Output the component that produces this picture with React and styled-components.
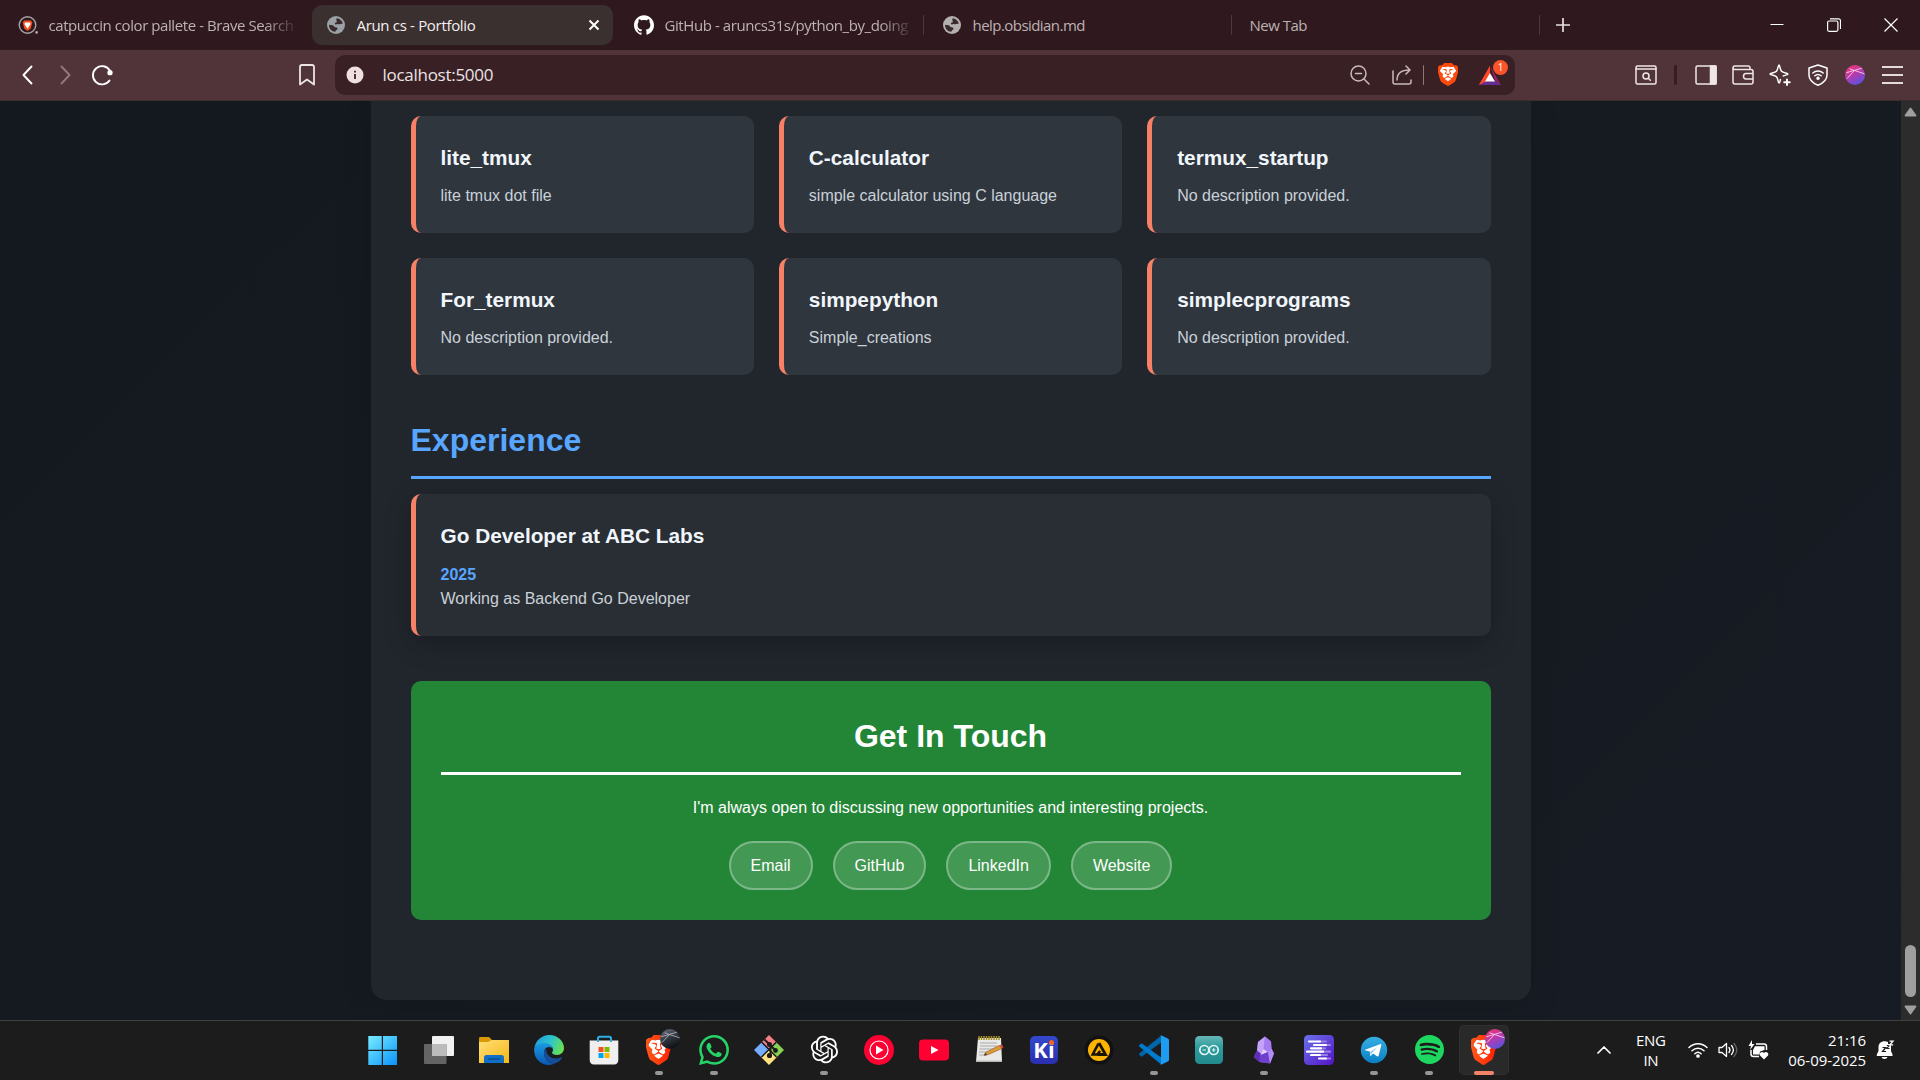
import React from "react";
import styled, { createGlobalStyle, css } from "styled-components";
import { SiBrave, SiGithub, SiWhatsapp, SiSpotify } from "react-icons/si";
import { RiOpenaiFill } from "react-icons/ri";

const Global = createGlobalStyle`
  *, *::before, *::after { box-sizing: border-box; }
  body { margin: 0; background: #1c1c1c; overflow: hidden; }
  h2, h3, p { margin: 0; }
  svg { display: block; flex: none; }
`;

const ui = `"Open Sans", "Noto Sans", sans-serif`;

const Screen = styled.div`
  width: 1920px;
  height: 1080px;
  display: flex;
  flex-direction: column;
  overflow: hidden;
  font-family: ${ui};
`;

/* ---------- tab strip ---------- */
const TabStrip = styled.header`
  height: 50px;
  flex: none;
  display: flex;
  align-items: center;
  background: #2f191e;
`;
const TabSlot = styled.div`
  width: 308px;
  height: 50px;
  padding: 5px 3px 5px 4px;
  display: flex;
  align-items: center;
  position: relative;
  ${(p) =>
    p.$divider &&
    css`
      &::after {
        content: "";
        position: absolute;
        right: 0;
        top: 15px;
        width: 1px;
        height: 20px;
        background: #4d383c;
      }
    `}
`;
const TabBody = styled.div`
  flex: 1;
  min-width: 0;
  height: 40px;
  padding: 0 ${(p) => (p.$fade ? 6 : 10)}px 0 13.5px;
  display: flex;
  align-items: center;
  border-radius: 10px;
  background: ${(p) => (p.$active ? "#3b3030" : "transparent")};
  color: ${(p) => (p.$active ? "#f5efef" : "#bcb2b3")};
`;
const TabIcon = styled.span`
  width: 20px;
  margin-right: 11px;
  display: flex;
  justify-content: center;
`;
const TabTitle = styled.span`
  flex: 1;
  min-width: 0;
  font-size: 15px;
  line-height: 22px;
  padding-bottom: 1px;
  letter-spacing: ${(p) => p.$spacing}px;
  white-space: nowrap;
  overflow: hidden;
  ${(p) => p.$fade && css`mask-image: linear-gradient(90deg, #000 86%, rgba(0, 0, 0, 0.15) 98%);`}
`;
const NewTabButton = styled.div`
  width: 46px;
  display: flex;
  justify-content: center;
`;
const WindowButtons = styled.div`
  margin-left: auto;
  padding-right: 1px;
  display: flex;
`;
const WindowButton = styled.div`
  width: 57px;
  display: flex;
  align-items: center;
  justify-content: center;
`;

/* ---------- toolbar ---------- */
const Toolbar = styled.div`
  height: 51px;
  flex: none;
  display: flex;
  align-items: center;
  padding: 0 8.8px 1px 8.5px;
  background: #50343a;
  border-bottom: 1px solid #3c2b2f;
`;
const Cell = styled.div`
  width: ${(p) => p.$w || 37.4}px;
  display: flex;
  flex: none;
  align-items: center;
  justify-content: center;
`;
const BookmarkCell = styled(Cell)`
  margin: 0 8.5px 0 165.5px;
`;
const AddressBar = styled.div`
  width: 1180px;
  height: 40px;
  flex: none;
  display: flex;
  align-items: center;
  padding: 0 4px 0 0;
  border-radius: 10px;
  background: #382024;
`;
const Url = styled.span`
  flex: 1;
  padding-left: 7.5px;
  color: #ece3e4;
  font-size: 17px;
  line-height: 24px;
  letter-spacing: -0.28px;
`;
const Divider = styled.i`
  width: ${(p) => p.$w || 1}px;
  height: 20px;
  margin: ${(p) => p.$m || 0};
  border-radius: 1px;
  background: ${(p) => p.$color};
`;
const Actions = styled.div`
  margin-left: auto;
  display: flex;
`;
const RewardsIcon = styled.div`
  position: relative;
  width: 24px;
  height: 22px;
`;
const Badge = styled.span`
  position: absolute;
  left: 15px;
  top: -4px;
  width: 15px;
  height: 15px;
  border-radius: 50%;
  background: #fb542b;
  color: #fff;
  font-size: 10px;
  line-height: 15px;
  text-align: center;
`;

/* ---------- web page ---------- */
const Viewport = styled.div`
  height: 919px;
  flex: none;
  display: flex;
`;
const Page = styled.main`
  width: 1901px;
  height: 919px;
  overflow: hidden;
  display: flex;
  justify-content: center;
  align-items: flex-start;
  background: linear-gradient(135deg, #14191f 0%, #161b22 60%, #171c24 100%);
  font-family: "Liberation Sans", Arial, sans-serif;
  line-height: 1.6;
`;
const Container = styled.div`
  width: 1160px;
  height: 899px;
  padding: 15px 40px 80px;
  background: #21262d;
  border-radius: 0 0 15px 15px;
  box-shadow: 0 8px 32px rgba(0, 0, 0, 0.12);
`;
const ProjectGrid = styled.section`
  display: grid;
  grid-template-columns: repeat(3, 1fr);
  gap: 25px;
`;
const Card = styled.article`
  padding: 25px;
  border-left: 5px solid #f78166;
  border-radius: 10px;
  background: ${(p) => (p.$raised ? "#292e34" : "#30363d")};
  box-shadow: ${(p) => (p.$raised ? "0 8px 26px rgba(0,0,0,0.25)" : "none")};
`;
const CardTitle = styled.h3`
  margin-bottom: ${(p) => p.$gap || 9}px;
  color: #f0f6fc;
  font-size: 20.8px;
`;
const CardText = styled.p`
  color: #c9d1d9;
  font-size: 16px;
  margin-bottom: ${(p) => (p.$flush ? 0 : -1)}px;
`;
const Period = styled.p`
  color: #58a6ff;
  font-size: 16px;
  font-weight: 700;
  line-height: 23px;
`;
const SectionTitle = styled.h2`
  padding-bottom: 10px;
  margin: ${(p) => p.$margin};
  border-bottom: 3px solid ${(p) => p.$line};
  color: ${(p) => p.$color};
  font-size: 32px;
`;
const Contact = styled.section`
  margin-top: 45px;
  padding: 30px;
  height: 239px;
  border-radius: 10px;
  background: #238636;
  color: #fff;
  text-align: center;
`;
const Links = styled.nav`
  display: flex;
  justify-content: center;
  gap: 20px;
  margin-top: 20px;
`;
const PillLink = styled.a`
  padding: 10px 20px;
  border: 2px solid rgba(255, 255, 255, 0.3);
  border-radius: 25px;
  background: rgba(255, 255, 255, 0.15);
  color: #fff;
  font-size: 16px;
  line-height: 25px;
`;
const Scrollbar = styled.div`
  width: 19px;
  display: flex;
  flex-direction: column;
  align-items: center;
  padding: 6px 0 5px;
  background: #2c2c2c;
`;
const Thumb = styled.div`
  width: 11px;
  height: 52px;
  margin: auto 0 8px;
  border-radius: 6px;
  background: #9f9f9f;
`;

/* ---------- taskbar ---------- */
const Taskbar = styled.footer`
  height: 60px;
  flex: none;
  display: flex;
  align-items: center;
  padding: 0 0 2px 356.5px;
  background: #1c1c1c;
  border-top: 1px solid #404040;
`;
const Apps = styled.div`
  display: flex;
`;
const AppSlot = styled.div`
  position: relative;
  width: 55px;
  height: 56px;
  display: flex;
  align-items: center;
  justify-content: center;
`;
const Tile = styled.div`
  width: 50px;
  height: 50px;
  display: flex;
  align-items: center;
  justify-content: center;
  border-radius: 5px;
  ${(p) =>
    p.$active &&
    css`
      background: #292929;
      border: 1px solid #303030;
    `}
`;
const Indicator = styled.i`
  position: absolute;
  bottom: 3px;
  left: 50%;
  width: ${(p) => (p.$active ? 20 : 8)}px;
  height: 4px;
  transform: translateX(-50%);
  border-radius: 2px;
  background: ${(p) => (p.$active ? "#f48467" : "#969696")};
`;
const Tray = styled.div`
  margin-left: auto;
  display: flex;
  align-items: center;
  color: #fff;
  font-size: 15px;
  line-height: 20px;
  letter-spacing: -0.4px;
  padding-right: 24px;
`;
const Language = styled.div`
  width: 64px;
  padding-right: 1.5px;
  text-align: center;
`;
const Clock = styled.div`
  width: 102.5px;
  text-align: right;
  padding-right: 10px;
  letter-spacing: -0.06px;
`;

/* ---------- icons ---------- */
const line = (extra = {}) => ({
  fill: "none",
  stroke: "currentColor",
  strokeWidth: 1.6,
  strokeLinecap: "round",
  strokeLinejoin: "round",
  ...extra,
});

const Globe = ({ color = "#9aa0a6" }) => (
  <svg width="18" height="18" viewBox="0 0 18 18">
    <circle cx="9" cy="9" r="9" fill={color} />
    <path
      d="M9.8 2.2c2.8.3 5.3 2.400 6 5.300l-3.300.8c-.9.100-1.200-.4-1.900-.4-.8 0-1.100.7-2.100.5-.9-.2-.7-1.300-.2-1.600.7-.4 1.300-.2 1.500-1 .200-.8-.7-1.100-.500-2 .100-.6.100-1.100.5-1.600zM2 8.800c1.700.3 3.200.2 4.200.8 1 .6.900 1.500 1.900 1.600 1 .100 2.100.2 2.400 1.100.300 1-.6 1.500-1.300 1.900-.600.400-.700 1.100-.9 1.600C4.700 15.800 2 12.600 2 8.800z"
      fill="#3a2a2c"
    />
  </svg>
);

const BraveSearch = () => (
  <svg width="20" height="20" viewBox="0 0 20 20">
    <circle cx="9.500" cy="10" r="8.300" fill="none" stroke="#a9a3a7" strokeWidth="1.400" />
    <path d="M6 5.500h7l1.200 2-1.400 6L9.500 16l-3.300-2.500-1.400-6z" fill="#f4511e" />
    <path d="M7 7.500h5l.6 1.400L9.500 13.800 6.400 8.900z" fill="#fff" />
    <circle cx="18.600" cy="17.400" r="1.300" fill="#b0abad" />
  </svg>
);

const BraveLion = ({ w = 22, h = 24, flat }) => (
  <svg width={w} height={h} viewBox="2.3 0 19.4 24" preserveAspectRatio="none">
    <defs>
      <linearGradient id="lion" x1="0" x2="1">
        <stop offset="0" stopColor="#ff5a1a" />
        <stop offset="1" stopColor="#ff1e00" />
      </linearGradient>
    </defs>
    <path d="M6 3.500h12l2 4.500-2.300 9L12 21.500 6.300 17 4 8z" fill="#fff" />
    <SiBrave size={24} fill={flat ? "#fb4a0b" : "url(#lion)"} stroke="none" />
  </svg>
);

const Ball = ({ size = 20, dark, x, y, id }) => (
  <svg x={x} y={y} width={size} height={size} viewBox="0 0 20 20">
    <defs>
      <linearGradient id={id} x1=".2" y1="0" x2=".7" y2="1">
        <stop offset="0" stopColor={dark ? "#666b7a" : "#ec3572"} />
        <stop offset=".5" stopColor={dark ? "#30343e" : "#b43bb0"} />
        <stop offset="1" stopColor={dark ? "#0b0c10" : "#5355e0"} />
      </linearGradient>
    </defs>
    <circle cx="10" cy="10" r="10" fill={`url(#${id})`} />
    <path d="M4.500 3.800L19.500 8.800M1.200 7.800L16.800 3.200M9.500 5.500l-7.500 8" fill="none" stroke={dark ? "#a9acb5" : "#f6c9ea"} strokeWidth=".9" />
  </svg>
);

const BraveApp = ({ dark }) => (
  <svg width="36" height="38" viewBox="0 0 36 38">
    <svg x="0" y="6" width="25" height="30" viewBox="0 0 25 30">
      <BraveLion w={25} h={30} />
    </svg>
    <Ball size={20} dark={dark} x={14} y={0} id={dark ? "ballDark" : "ballPink"} />
  </svg>
);

const StartIcon = () => (
  <svg width="33" height="30" viewBox="1.700 0 33 30">
    <defs>
      <linearGradient id="winAll" gradientUnits="userSpaceOnUse" x1="2" y1="0" x2="30" y2="30">
        <stop offset="0" stopColor="#79eeff" />
        <stop offset="1" stopColor="#0c93fb" />
      </linearGradient>
    </defs>
    <path d="M2 1h13.500v13.800H2zM16.700 1h14v13.800h-14zM2 16h13.500v14H2zM16.700 16h14v14h-14z" fill="url(#winAll)" />
  </svg>
);

const TaskView = () => (
  <svg width="30" height="30" viewBox="0 0 30 30">
    <rect x="8" y="1" width="22" height="20" rx="1" fill="#f1f1f1" />
    <rect x="0" y="9" width="22.500" height="20" rx="1" fill="#646464" />
    <rect x="8" y="9" width="14.500" height="12" fill="#bcbcbc" />
  </svg>
);

const Folder = () => (
  <svg width="30" height="30" viewBox="0 0 30 30">
    <path d="M0 3.500C0 2.600.6 2 1.500 2H10l3 3-3 3H0z" fill="#d99a05" />
    <defs>
      <linearGradient id="fold" x1="0" y1="0" x2="1" y2="1">
        <stop offset="0" stopColor="#ffdf78" />
        <stop offset="1" stopColor="#f7b718" />
      </linearGradient>
    </defs>
    <path d="M0 7h9l3.500-2H30v23H0z" fill="url(#fold)" />
    <path d="M5 28v-5.500A2.500 2.500 0 0 1 7.500 20h15a2.500 2.500 0 0 1 2.500 2.500V28z" fill="#0f6fc5" />
    <path d="M9 24h12" stroke="#0a4c94" strokeWidth="1.500" />
  </svg>
);

const Edge = () => (
  <svg width="30" height="30" viewBox="0 0 30 30">
    <defs>
      <linearGradient id="edgeTop" x1="0" y1=".3" x2="1" y2=".6">
        <stop offset="0" stopColor="#1f9fdc" />
        <stop offset=".5" stopColor="#2cc3cf" />
        <stop offset="1" stopColor="#6be24d" />
      </linearGradient>
      <linearGradient id="edgeLeft" x1="0" y1="0" x2="0" y2="1">
        <stop offset="0" stopColor="#1b9be0" />
        <stop offset="1" stopColor="#0b57b5" />
      </linearGradient>
    </defs>
    <path d="M.4 13C1.500 5.500 7.800 0 15.200 0 24 0 30 6.500 30 13c0 4-3 7-7 7-3 0-5-1-5-2.200 0-.8 1-1.200 1-3.300C19 11.500 16 9 11 9 6.500 9 2 10.500.4 13z" fill="url(#edgeTop)" />
    <path d="M.2 13.500C1.500 9.700 5.500 8 10.500 8c5 0 8.500 3 8.500 6.500-.5-1.500-2-2.800-4.500-2.500-3 .3-4.800 3-4.500 6.500.3 5 4.500 10.500 11 9.800A15 15 0 0 1 15 30C6.500 30-.8 23 .2 13.500z" fill="url(#edgeLeft)" />
    <path d="M12 13.500c-1.700 1-2 3-2 5 .3 5.500 5 10.700 12 9.500 2.600-1 4.800-2.900 6-5 .3-.6-.2-1-.8-.7-1.700 1-3.600 1.200-5.400 1.200-5.600 0-9.800-3.700-9.800-10z" fill="#154f9c" />
  </svg>
);

const Store = () => (
  <svg width="30" height="30" viewBox="0 0 30 30">
    <path d="M9 7V3.500C9 2.300 9.600 1.800 10.600 1.800h9.800c1 0 1.600.5 1.600 1.700V7" fill="none" stroke="#2bb0e6" strokeWidth="2" />
    <path d="M.7 5.500h28.600V25c0 2.500-1.500 4.500-4.300 4.500H5C2.200 29.500.7 27.500.7 25z" fill="#efefef" />
    <path d="M8 7V4h2v3zM21 7V4h2v3z" fill="#2bb0e6" />
    <path d="M9.500 12h5v5h-5z" fill="#f25022" />
    <path d="M15.500 12h5v5h-5z" fill="#7fba00" />
    <path d="M9.500 18h5v5h-5z" fill="#00a4ef" />
    <path d="M15.500 18h5v5h-5z" fill="#ffb900" />
  </svg>
);

const GitIcon = () => (
  <svg width="30" height="30" viewBox="0 0 30 30">
    <path d="M15 0l7 7-7 7-7-7z" fill="#f37f83" />
    <path d="M22.500 7.500L30 15l-7.500 7.500L15 15z" fill="#86d257" />
    <path d="M7.500 7.500L15 15l-7.500 7.500L0 15z" fill="#78acff" />
    <path d="M15 15l7.500 7.500L15 30l-7.500-7.500z" fill="#ffe182" />
    <path d="M8 7.500l14.500 14.500M22 7.500L7.500 22" stroke="#1c1c1c" strokeWidth="1.500" />
    <path d="M10.500 4.500l6 6v10M16.500 10.500l5 5" stroke="#1c1c1c" strokeWidth="2" fill="none" />
    <circle cx="15.500" cy="9.500" r="2.500" fill="#1c1c1c" />
    <circle cx="15.500" cy="20.500" r="2.600" fill="#1c1c1c" />
    <circle cx="21.500" cy="15.500" r="2.400" fill="#1c1c1c" />
  </svg>
);

const YtMusic = () => (
  <svg width="30" height="30" viewBox="0 0 30 30">
    <circle cx="15" cy="15" r="15" fill="#ff0033" />
    <circle cx="15" cy="15" r="9" fill="none" stroke="#fff" strokeWidth="1.200" />
    <path d="M12 10.500v9l7.500-4.500z" fill="#fff" />
  </svg>
);
const YouTube = () => (
  <svg width="30" height="30" viewBox="0 0 30 30">
    <rect y="4.500" width="30" height="21" rx="4" fill="#ff0033" />
    <path d="M12 11v8l7.500-4z" fill="#fff" />
  </svg>
);
const Notes = () => (
  <svg width="30" height="30" viewBox="0 0 30 30">
    <path d="M4 3h23l1 24H2z" fill="#e9e9e7" />
    <path d="M2 25.500h26V27H2z" fill="#b9b9b9" />
    <path d="M6 8h17M6 11h17M5.500 14h17M5 17h12M5 20h8" stroke="#a9a9ad" strokeWidth="1" />
    <path d="M5 1v4M7.500 1v4M10 1v4M12.500 1v4M15 1v4M17.500 1v4M20 1v4M22.500 1v4M25 1v4" stroke="#a58f22" strokeWidth="1.500" />
    <path d="M11.500 17.500L25 10.500l3 3-13.500 6-4 .8z" fill="#dd9b3c" stroke="#8b5a20" strokeWidth=".6" />
    <path d="M25 10.500l2.500-1 2 2.500-1.800 1.500z" fill="#e0503f" />
    <path d="M9.800 20.600l1.500-2.600 2 1.800z" fill="#4a3b2c" />
  </svg>
);
const KiTile = styled.span`
  position: relative;
  width: 28px;
  height: 28px;
  border-radius: 5px;
  background: linear-gradient(#3349cc, #2a2fae);
  color: #fff;
  font: 700 22px/27px "Open Sans", sans-serif;
  letter-spacing: 0;
  text-align: center;
  &::after {
    content: "";
    position: absolute;
    right: 4px;
    top: 4px;
    width: 5px;
    height: 5px;
    border-radius: 50%;
    background: #f4631e;
  }
`;
const Aimp = () => (
  <svg width="30" height="30" viewBox="0 0 30 30">
    <circle cx="15" cy="15" r="14.500" fill="#111" />
    <circle cx="15" cy="15" r="11" fill="#fdb400" />
    <path d="M15 8l6.500 11.500h-8" fill="none" stroke="#1a1408" strokeWidth="2.800" />
    <path d="M14.500 8.500L8.700 19.500h4.500l3-3.500" fill="none" stroke="#1a1408" strokeWidth="2.600" />
  </svg>
);
const VsCode = () => (
  <svg width="30" height="30" viewBox="0 0 30 30">
    <path d="M.5 18.200c-.6.600-.5 1.400 0 1.900l1.300 1.100c.5.400 1 .4 1.500 0L22.500 7.300V.3z" fill="#0065a9" />
    <path d="M.5 11.800c-.6-.6-.5-1.400 0-1.900l1.300-1.100c.5-.4 1-.4 1.500 0l19.200 13.900v7z" fill="#007acc" />
    <path d="M22 29.700c-.5-.200-.5-.5 0-1V1.300c-.5-.5-.5-.8 0-1l6.900 3.100c.7.300 1.100.9 1.100 1.600v20c0 .7-.4 1.300-1.100 1.600z" fill="#1f9cf0" />
  </svg>
);
const Arduino = () => (
  <svg width="30" height="30" viewBox="0 0 30 30">
    <defs>
      <linearGradient id="ard" x1="0" y1="0" x2="0" y2="1">
        <stop offset="0" stopColor="#67b7b5" />
        <stop offset=".4" stopColor="#2e9c9d" />
        <stop offset="1" stopColor="#238a8c" />
      </linearGradient>
    </defs>
    <rect x="1" y="1" width="28" height="28" rx="4.500" fill="url(#ard)" />
    <circle cx="10.300" cy="15" r="4.500" fill="none" stroke="#e4f4f3" strokeWidth="1.700" />
    <circle cx="19.700" cy="15" r="4.500" fill="none" stroke="#e4f4f3" strokeWidth="1.700" />
    <path d="M8.500 15h3.400M18 15h3.400M19.700 13.300v3.400" stroke="#e4f4f3" strokeWidth="1.100" />
  </svg>
);
const Obsidian = () => (
  <svg width="30" height="30" viewBox="0 0 30 30">
    <path d="M16 1.500L9 7l-1 8.500L4.800 22l5.700 5L21 28.500l4-10-2.500-5-.5-7z" fill="#8a5ce0" />
    <path d="M16 1.500L9 7l-1 8.500 4 3.500 3.500-5z" fill="#c3a2f7" />
    <path d="M16 1.500l6 5 .5 7-3.500 3.500-4.500-3z" fill="#a67bf0" />
    <path d="M8 15.500l4 3.500-1.500 8-5.700-5z" fill="#5c2fb5" />
    <path d="M14.500 14L19 17l-7.500 3.500.5-1.500z" fill="#e2cffc" />
    <path d="M11.500 20l7.500-3 2 11.500-10.500-1.500z" fill="#6f3fce" />
    <path d="M19 17l3.500-3.500 2.500 5-4 10z" fill="#b48cf5" />
  </svg>
);
const Wave = () => (
  <svg width="30" height="30" viewBox="0 0 30 30">
    <defs>
      <linearGradient id="wav" x1="0" y1="0" x2="1" y2="1">
        <stop offset="0" stopColor="#6a72ea" />
        <stop offset="1" stopColor="#5413c4" />
      </linearGradient>
    </defs>
    <rect width="30" height="30" rx="4.500" fill="url(#wav)" />
    <g strokeWidth="2.200" strokeLinecap="round">
      <path d="M14 6.500h8M20 10h6M15 13.300h6M17 16.700h9M14 20h9M20 23.500h6" stroke="#9a7ee8" />
      <path d="M5 6.500h11M10 10h12M7 13.300h10M3 16.700h16M7 20h9M15 23.500h7" stroke="#fff" />
    </g>
  </svg>
);
const Telegram = () => (
  <svg width="30" height="30" viewBox="0 0 30 30">
    <defs>
      <linearGradient id="tg" x1="0" y1="0" x2="0" y2="1">
        <stop offset="0" stopColor="#37aee2" />
        <stop offset="1" stopColor="#0a80c4" />
      </linearGradient>
    </defs>
    <circle cx="15" cy="15" r="13.200" fill="url(#tg)" />
    <path d="M6 14.800L21 9.200c.8-.3 1.400.2 1.200 1.200l-2.500 10.200c-.2 1-.9 1.200-1.700.7l-3.900-2.900-2 2.200c-.5.500-1 .3-1-.4l.2-3.400-5.100-1.500c-.6-.2-.6-.4-.2-.5z" fill="#fff" />
    <path d="M11.500 16.500l7-4.500-5.500 5.700-.9 2.600z" fill="#9fcbe8" />
  </svg>
);

const Glyph = styled.span`
  display: flex;
  color: ${(p) => p.$color};
  font-size: 30px;
`;

const apps = [
  { icon: <StartIcon /> },
  { icon: <TaskView /> },
  { icon: <Folder /> },
  { icon: <Edge /> },
  { icon: <Store /> },
  { icon: <BraveApp dark />, open: true, tall: true },
  { icon: <Glyph $color="#25d366"><SiWhatsapp /></Glyph>, open: true },
  { icon: <GitIcon /> },
  { icon: <Glyph $color="#fff"><RiOpenaiFill size={33} /></Glyph>, open: true },
  { icon: <YtMusic /> },
  { icon: <YouTube /> },
  { icon: <Notes /> },
  { icon: <KiTile>Ki</KiTile> },
  { icon: <Aimp /> },
  { icon: <VsCode />, open: true },
  { icon: <Arduino /> },
  { icon: <Obsidian />, open: true },
  { icon: <Wave /> },
  { icon: <Telegram />, open: true },
  { icon: <Glyph $color="#1ed760"><SiSpotify size={29} /></Glyph>, open: true },
  { icon: <BraveApp />, open: true, active: true, tall: true },
];

const Lift = styled.span`
  display: flex;
  margin: ${(p) => (p.$tall ? "-4px 0 0 10px" : "0")};
`;

const tabs = [
  { title: "catpuccin color pallete - Brave Search", icon: <BraveSearch />, fade: true, spacing: -0.42 },
  { title: "Arun cs - Portfolio", icon: <Globe />, active: true, spacing: -0.32 },
  { title: "GitHub - aruncs31s/python_by_doing", icon: <SiGithub size={20} color="#fff" />, fade: true, divider: true, spacing: -0.42 },
  { title: "help.obsidian.md", icon: <Globe color="#b4b0b0" />, divider: true, spacing: -0.55 },
  { title: "New Tab", divider: true, spacing: -0.5 },
];

const projects = [
  ["lite_tmux", "lite tmux dot file"],
  ["C-calculator", "simple calculator using C language"],
  ["termux_startup", "No description provided."],
  ["For_termux", "No description provided."],
  ["simpepython", "Simple_creations"],
  ["simplecprograms", "No description provided."],
];

const Tint = styled.span`
  display: flex;
  color: ${(p) => p.$c};
`;

export default function App() {
  return (
    <Screen>
      <Global />
      <TabStrip>
        {tabs.map((t) => (
          <TabSlot key={t.title} $divider={t.divider}>
            <TabBody $active={t.active} $fade={t.fade}>
              {t.icon && <TabIcon>{t.icon}</TabIcon>}
              <TabTitle $fade={t.fade} $spacing={t.spacing}>{t.title}</TabTitle>
              {t.active && (
                <svg width="18" height="20" viewBox="1 0 18 20" {...line({ strokeWidth: 2, stroke: "#fff", strokeLinecap: "butt" })}>
                  <path d="M5.500 5.500l9 9M14.500 5.500l-9 9" />
                </svg>
              )}
            </TabBody>
          </TabSlot>
        ))}
        <NewTabButton>
          <svg width="14" height="14" viewBox="0 0 14 14" stroke="#e8dfe0" strokeWidth="1.700">
            <path d="M7 0v14M0 7h14" />
          </svg>
        </NewTabButton>
        <WindowButtons>
          <WindowButton>
            <svg width="14" height="14" viewBox="0 0 14 14" stroke="#fff"><path d="M.5 6.500h13" /></svg>
          </WindowButton>
          <WindowButton>
            <svg width="14" height="14" viewBox="0 0 14 14" fill="none" stroke="#fff" strokeWidth="1.200">
              <rect x=".6" y="3" width="10.300" height="10.300" rx="1.500" />
              <path d="M3 .8h8.500c1.200 0 2 .8 2 2V11" />
            </svg>
          </WindowButton>
          <WindowButton>
            <svg width="14" height="14" viewBox="0 0 14 14" stroke="#fff" strokeWidth="1.200"><path d="M.5.5l13 13M13.500.5l-13 13" /></svg>
          </WindowButton>
        </WindowButtons>
      </TabStrip>

      <Toolbar>
        <Cell $w={37.5}>
          <Tint $c="#fff">
            <svg width="12" height="20" viewBox="0 0 12 20" {...line({ strokeWidth: 1.900 })}><path d="M10.500 1.500L2.500 10l8 8.500" /></svg>
          </Tint>
        </Cell>
        <Cell $w={37.5}>
          <Tint $c="#92797e">
            <svg width="12" height="20" viewBox="0 0 12 20" {...line({ strokeWidth: 1.900 })}><path d="M2.500 1.500l8 8.500-8 8.500" /></svg>
          </Tint>
        </Cell>
        <Cell $w={37.5}>
          <Tint $c="#fff">
            <svg width="22" height="22" viewBox="0 0 22 22" {...line({ strokeWidth: 1.900 })}>
              <path d="M18.500 16.500A9.100 9.100 0 1 1 18.800 6.500l1 2" />
              <circle cx="19" cy="8.700" r="1.700" fill="#fff" />
            </svg>
          </Tint>
        </Cell>
        <BookmarkCell $w={40}>
          <Tint $c="#ece4e5">
            <svg width="16" height="22" viewBox="0 0 16 22" {...line({ strokeWidth: 1.800 })}><path d="M3 1h10c1.100 0 2 .9 2 2v17.500l-7-5-7 5V3c0-1.100.9-2 2-2z" /></svg>
          </Tint>
        </BookmarkCell>
        <AddressBar>
          <Cell $w={40}>
            <svg width="18" height="18" viewBox="0 0 18 18">
              <circle cx="9" cy="9" r="8.500" fill="#efdfe1" />
              <path d="M9 8v5M9 4.700v1.800" stroke="#382024" strokeWidth="1.800" />
            </svg>
          </Cell>
          <Url>localhost:5000</Url>
          <Cell $w={42}>
            <Tint $c="#c9b9bb">
              <svg width="20" height="20" viewBox="0 0 20 20" {...line({ strokeWidth: 1.500 })}>
                <circle cx="8.500" cy="8.500" r="7.500" />
                <path d="M14 14l5 5M5.500 8.500h6" />
              </svg>
            </Tint>
          </Cell>
          <Cell $w={42}>
            <Tint $c="#c9b9bb">
              <svg width="20" height="20" viewBox="0 0 20 20" {...line({ strokeWidth: 1.500 })}>
                <path d="M1 6v11c0 1.200.8 2 2 2h14c1.200 0 2-.8 2-2v-2M5 15c0-6 3-10 12.500-10M14 1l4 4-4 4" />
              </svg>
            </Tint>
          </Cell>
          <Divider $w={1.500} $m="0 3px 0 -.5px" $color="#8b7679" />
          <Cell $w={42}><BraveLion w={20} h={23} flat /></Cell>
          <Cell $w={42}>
            <RewardsIcon>
              <svg width="24" height="22" viewBox="0 0 24 22">
                <path d="M12 2L1 21l11-6z" fill="#ff4724" />
                <path d="M12 2l11 19-6-5z" fill="#9e1f63" />
                <path d="M1 21l6-5h10l6 5z" fill="#662d91" />
                <path d="M12 2v8L7.500 17.500 1 21z" fill="#ff4724" />
                <path d="M12 9l5 8.500H7z" fill="#fff" />
              </svg>
              <Badge>1</Badge>
            </RewardsIcon>
          </Cell>
        </AddressBar>
        <Actions>
          <Cell>
            <Tint $c="#f0e6e7">
              <svg width="22" height="20" viewBox="0 0 22 20" {...line({ strokeWidth: 1.500 })}>
                <rect x="1" y="1" width="20" height="18" rx="1.500" />
                <path d="M1 4h20" />
                <circle cx="11" cy="11" r="3" />
                <path d="M13.300 13.300L15.300 15.300" />
              </svg>
            </Tint>
          </Cell>
          <Cell $w={22.6}><Divider $w={3} $color="#351d22" /></Cell>
          <Cell>
            <Tint $c="#f0e6e7">
              <svg width="22" height="20" viewBox="0 0 22 20" {...line({ strokeWidth: 1.500 })}>
                <rect x="1" y="1" width="20" height="18" rx="1.500" />
                <path d="M15.500 1H21v18h-5.500z" fill="currentColor" />
              </svg>
            </Tint>
          </Cell>
          <Cell>
            <Tint $c="#f0e6e7">
              <svg width="22" height="20" viewBox="0 0 22 20" {...line({ strokeWidth: 1.500 })}>
                <path d="M18 4.500V3c0-1.100-.9-2-2-2H3C1.900 1 1 1.900 1 3s.9 1.500 2 1.500h16c1.100 0 2 .7 2 2V17c0 1.100-.9 2-2 2H3c-1.100 0-2-.9-2-2V3M21 8.500h-7c-1.700 0-2.500 1.300-2.500 2.800s.8 2.700 2.500 2.700h7" />
              </svg>
            </Tint>
          </Cell>
          <Cell>
            <Tint $c="#fff">
              <svg width="22" height="22" viewBox="0 0 22 22" {...line({ strokeWidth: 1.500 })}>
                <path d="M10 1c1 0 .8 4.500 2.500 6.200S19 9 19 10s-3 1-4.700 1.900M10 1C9 1 9.200 5.500 7.500 7.200S1 9 1 10s4.800 1.100 6.500 2.800S9 19 10 19c.8 0 1-1.500 1.400-3.500" />
                <path d="M18 15.500v5.500M15.200 18.200h5.600" strokeWidth="1.900" />
              </svg>
            </Tint>
          </Cell>
          <Cell>
            <Tint $c="#fff">
              <svg width="20" height="22" viewBox="0 0 20 22" {...line({ strokeWidth: 1.500 })}>
                <path d="M10 1l9 3v7c0 4.500-3.500 8-9 10.300C4.500 19 1 15.500 1 11V4z" />
                <path d="M4.800 9c3-2.700 7.400-2.700 10.400 0M6.800 11.800c1.900-1.600 4.500-1.600 6.400 0" />
                <circle cx="10" cy="14.300" r="1" fill="#fff" />
              </svg>
            </Tint>
          </Cell>
          <Cell><Ball size={20} id="profileBall" /></Cell>
          <Cell>
            <svg width="21" height="18" viewBox="0 0 21 18" stroke="#e3dadb" strokeWidth="1.800"><path d="M0 1h21M0 9h21M0 17h21" /></svg>
          </Cell>
        </Actions>
      </Toolbar>

      <Viewport>
        <Page>
          <Container>
            <ProjectGrid>
              {projects.map(([name, text]) => (
                <Card key={name}>
                  <CardTitle>{name}</CardTitle>
                  <CardText>{text}</CardText>
                </Card>
              ))}
            </ProjectGrid>
            <SectionTitle $margin="40px 0 15px" $color="#58a6ff" $line="#58a6ff">Experience</SectionTitle>
            <Card $raised>
              <CardTitle $gap={10.4}>Go Developer at ABC Labs</CardTitle>
              <Period>2025</Period>
              <CardText $flush>Working as Backend Go Developer</CardText>
            </Card>
            <Contact>
              <SectionTitle $margin="0 0 20px" $color="#fff" $line="#fff">Get In Touch</SectionTitle>
              <p>I'm always open to discussing new opportunities and interesting projects.</p>
              <Links>
                {["Email", "GitHub", "LinkedIn", "Website"].map((l) => (
                  <PillLink key={l}>{l}</PillLink>
                ))}
              </Links>
            </Contact>
          </Container>
        </Page>
        <Scrollbar>
          <svg width="13" height="10" viewBox="0 0 13 10"><path d="M6.500 1.500L11.500 8.500H1.500z" fill="#9f9f9f" stroke="#9f9f9f" strokeWidth="1.800" strokeLinejoin="round" /></svg>
          <Thumb />
          <svg width="13" height="10" viewBox="0 0 13 10"><path d="M6.500 8.500L11.500 1.500H1.500z" fill="#9f9f9f" stroke="#9f9f9f" strokeWidth="1.800" strokeLinejoin="round" /></svg>
        </Scrollbar>
      </Viewport>

      <Taskbar>
        <Apps>
          {apps.map((a, i) => (
            <AppSlot key={i}>
              <Tile $active={a.active}><Lift $tall={a.tall}>{a.icon}</Lift></Tile>
              {a.open && <Indicator $active={a.active} />}
            </AppSlot>
          ))}
        </Apps>
        <Tray>
          <Cell $w={32}>
            <svg width="14" height="8" viewBox="0 0 14 8" {...line({ stroke: "#fff", strokeWidth: 1.700 })}><path d="M1 7l6-6 6 6" /></svg>
          </Cell>
          <Language>ENG<br />IN</Language>
          <Cell $w={29}>
            <svg width="20" height="16" viewBox="0 0 20 16" {...line({ stroke: "#fff", strokeWidth: 1.500 })}>
              <path d="M1 5.500c5.200-5 12.800-5 18 0M4 8.700c3.500-3.300 8.500-3.300 12 0M6.900 11.700c1.900-1.700 4.300-1.700 6.200 0" />
              <circle cx="10" cy="14" r="1.100" fill="#fff" />
            </svg>
          </Cell>
          <Cell $w={30}>
            <svg width="20" height="16" viewBox="0 0 20 16" {...line({ stroke: "#fff", strokeWidth: 1.300 })}>
              <path d="M1 5.500h3L8.500 1.500v13L4 10.500H1zM11 5.500c1.200 1.500 1.200 3.500 0 5M13.500 3.500c2.300 2.700 2.300 6.300 0 9" />
              <path d="M16 1.500c3.500 4 3.500 9 0 13" stroke="#666" />
            </svg>
          </Cell>
          <Cell $w={31}>
            <svg width="21" height="20" viewBox="0 0 21 20">
              <path d="M8 4h8c1.500 0 2.500 1 2.500 2.500V10M3 10v4c0 1.500 1 2.500 2.500 2.500H11" fill="none" stroke="#fff" strokeWidth="1.500" />
              <path d="M7 6.300h9.500V10L12 11.500 11.500 14.500H5V10z" fill="#fff" />
              <path d="M4 0L.5 6h2.500L2 10l4.500-6H4z" fill="#fff" />
              <path d="M16 19.500l-4-4c-1.500-2.500 2-5 4-2.500 2-2.500 5.500 0 4 2.500z" fill="#fff" />
            </svg>
          </Cell>
          <Clock>21:16<br />06-09-2025</Clock>
          <svg width="20" height="20" viewBox="0 0 20 20">
            <path d="M2.500 7C2.500 3.500 5 1.200 8.500 1.200c1.500 0 2.700.3 3.500.8V4h3v7l1.500 3.500V16H.8v-1.500L2.500 11z" fill="#fff" />
            <path d="M5.500 17h6c-.5 1.300-1.500 2-3 2s-2.500-.7-3-2z" fill="#fff" />
            <path d="M6.500 7.500h3.300l-3.300 4h3.500" fill="none" stroke="#1c1c1c" strokeWidth="1.200" />
            <path d="M10.800 5.500h2.500l-2.500 3h2.700" fill="none" stroke="#1c1c1c" strokeWidth="1.100" />
            <path d="M13.500 1.200h3.500l-3.200 3.600h3.400" fill="none" stroke="#fff" strokeWidth="1.300" />
          </svg>
        </Tray>
      </Taskbar>
    </Screen>
  );
}
